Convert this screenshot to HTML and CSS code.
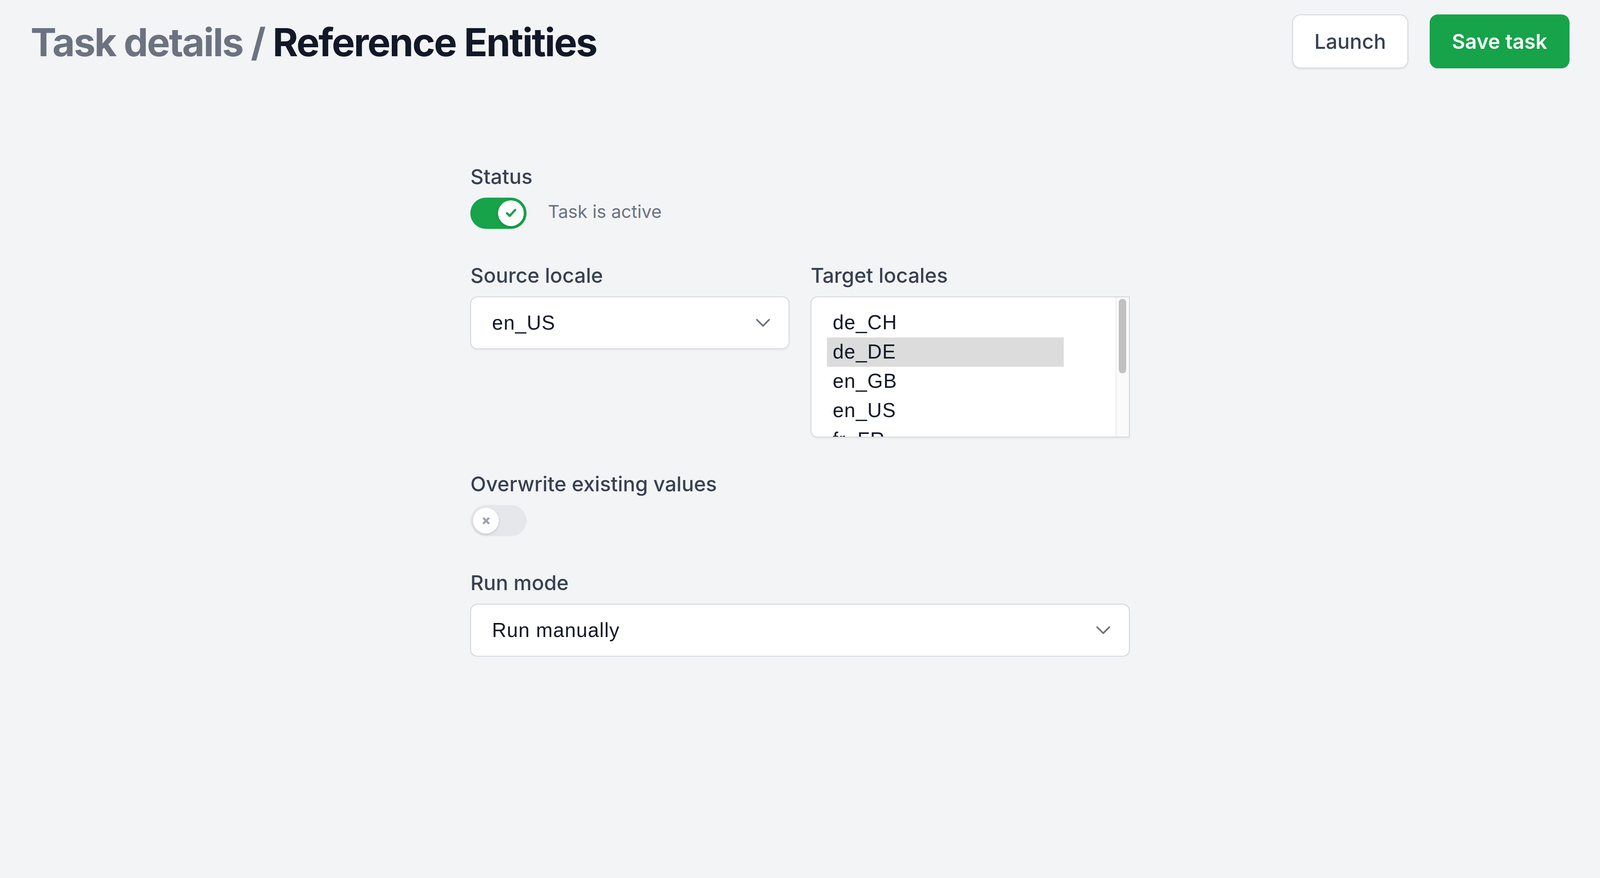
FILE: index.html
```html
<!DOCTYPE html>
<html lang="en">
<head>
    <meta charset="UTF-8">
    <meta name="viewport" content="width=device-width, initial-scale=1.0">
    <title>Task details</title>

    <link rel="stylesheet" href="styles.css">
</head>
<body>

    <header class="page-header">
        <h1 class="page-title"><span class="crumb">Task details /</span> Reference Entities</h1>
        <div class="actions">
            <button class="btn btn-secondary">Launch</button>
            <button class="btn btn-primary">Save task</button>
        </div>
    </header>

    <main class="task-form">
        <!-- Status -->
        <div class="field">
            <div class="label">Status</div>
            <div class="toggle-row">
                <span class="toggle is-on">
                    <span class="knob">
                        <svg class="icon-check" viewBox="0 0 11 9"><path d="M1.5 4.6l2.6 2.6 5.4-5.8" fill="none" stroke="#16a34a" stroke-width="2.2" stroke-linecap="round" stroke-linejoin="round"/></svg>
                    </span>
                </span>
                <span class="toggle-text">Task is active</span>
            </div>
        </div>

        <!-- Locales -->
        <div class="field-row">
            <div class="field">
                <div class="label">Source locale</div>
                <div class="select">
                    <span>en_US</span>
                    <svg class="icon-chevron" viewBox="0 0 14 8"><path d="M1 1l6 6 6-6" fill="none" stroke="#6b7280" stroke-width="1.6" stroke-linecap="round" stroke-linejoin="round"/></svg>
                </div>
            </div>
            <div class="field">
                <div class="label">Target locales</div>
                <div class="listbox">
                    <div class="options">
                        <div class="option">de_CH</div>
                        <div class="option is-selected">de_DE</div>
                        <div class="option">en_GB</div>
                        <div class="option">en_US</div>
                        <div class="option">fr_FR</div>
                    </div>
                    <div class="scrollbar"><div class="thumb"></div></div>
                </div>
            </div>
        </div>

        <!-- Overwrite -->
        <div class="field">
            <div class="label">Overwrite existing values</div>
            <span class="toggle">
                <span class="knob">
                    <svg class="icon-x" viewBox="0 0 8 8"><path d="M1.7 1.7l4.6 4.6M6.3 1.7l-4.6 4.6" fill="none" stroke="#9ca3af" stroke-width="2" stroke-linecap="round"/></svg>
                </span>
            </span>
        </div>

        <!-- Run mode -->
        <div class="field">
            <div class="label">Run mode</div>
            <div class="select">
                <span>Run manually</span>
                <svg class="icon-chevron" viewBox="0 0 14 8"><path d="M1 1l6 6 6-6" fill="none" stroke="#6b7280" stroke-width="1.6" stroke-linecap="round" stroke-linejoin="round"/></svg>
            </div>
        </div>
    </main>

</body>
</html>
```

FILE: styles.css
```css
/* 1rem = 1/156.8 of the window width, so the page scales with the screen */
html {
    font-size: calc(100vw / 156.8);
    background: #f3f4f6;
}
body {
    margin: 0;
    font-family: Inter, "Noto Sans", sans-serif;
    color: #111827;
}
.page-header {
    display: flex;
    align-items: center;
    justify-content: space-between;
    padding: 1.4rem 3rem 0;
}
.page-title {
    margin: 0;
    font-size: 3.8rem;
    font-weight: 700;
    letter-spacing: -0.03em;
    line-height: 5.3rem;
    color: #111827;
    position: relative;
    top: 0.1rem;
}
.crumb {
    color: #6b7280;
}
.actions {
    display: flex;
    gap: 2.1rem;
}
.btn {
    height: 5.3rem;
    padding: 0 2.1rem;
    border: 0.1rem solid transparent;
    border-radius: 0.8rem;
    font-family: Inter, sans-serif;
    font-size: 2rem;
    font-weight: 600;
    cursor: pointer;
}
.btn-secondary {
    font-weight: 500;
    background: #fff;
    border-color: #d1d5db;
    color: #374151;
    box-shadow: 0 0.1rem 0.2rem rgba(0, 0, 0, 0.06);
}
.btn-primary {
    background: #16a34a;
    color: #fff;
}
.task-form {
    width: 64.6rem;
    margin: 9.24rem auto 0;
    display: flex;
    flex-direction: column;
    gap: 3.2rem;
}
.label {
    font-size: 2rem;
    line-height: 2.8rem;
    font-weight: 500;
    color: #374151;
    margin-bottom: 0.64rem;
}
.field-row {
    display: grid;
    grid-template-columns: 1fr 1fr;
    column-gap: 2.1rem;
    align-items: start;
}
.toggle-row {
    display: flex;
    align-items: center;
    gap: 2.1rem;
}
.toggle {
    display: flex;
    box-sizing: border-box;
    width: 5.5rem;
    height: 3.05rem;
    padding: 0.25rem;
    border-radius: 1.6rem;
    background: #e5e7eb;
}
.toggle.is-on {
    background: #16a34a;
    justify-content: flex-end;
}
.knob {
    display: flex;
    align-items: center;
    justify-content: center;
    width: 2.55rem;
    height: 2.55rem;
    border-radius: 50%;
    background: #fff;
    box-shadow: 0 0.1rem 0.25rem rgba(0, 0, 0, 0.15);
}
.icon-check {
    width: 1.1rem;
    height: 0.9rem;
}
.icon-x {
    width: 0.8rem;
    height: 0.8rem;
}
.icon-chevron {
    width: 1.4rem;
    height: 0.8rem;
}
.toggle-text {
    font-size: 1.75rem;
    line-height: 2.4rem;
    color: #6b7280;
    margin-top: -0.3rem;
}
.select {
    display: flex;
    align-items: center;
    justify-content: space-between;
    box-sizing: border-box;
    height: 5.16rem;
    padding: 0 1.8rem 0 2.04rem;
    border: 0.1rem solid #d1d5db;
    border-radius: 0.7rem;
    background: #fff;
    box-shadow: 0 0.1rem 0.2rem rgba(0, 0, 0, 0.05);
    font-family: "Liberation Sans", Arial, sans-serif;
    font-size: 1.95rem;
    letter-spacing: 0.05rem;
    color: #111827;
}
.listbox {
    display: flex;
    box-sizing: border-box;
    height: 13.8rem;
    border: 0.1rem solid #d1d5db;
    border-radius: 0.7rem 0 0 0.7rem;
    background: #fff;
    overflow: hidden;
    box-shadow: 0 0.1rem 0.2rem rgba(0, 0, 0, 0.05);
}
.options {
    flex: 1;
    padding: 1.05rem 0 0 1.5rem;
}
.option {
    box-sizing: border-box;
    width: 23.2rem;
    height: 2.87rem;
    line-height: 2.87rem;
    padding-left: 0.58rem;
    font-family: "Liberation Sans", Arial, sans-serif;
    font-size: 1.95rem;
    letter-spacing: 0.05rem;
    color: #111827;
}
.option.is-selected {
    background: #dcdcdc;
}
.scrollbar {
    width: 1.3rem;
    padding: 0.15rem 0.25rem 0;
    box-sizing: border-box;
    background: #fafafa;
    border-left: 0.1rem solid #ebebeb;
}
.thumb {
    width: 0.7rem;
    height: 7.3rem;
    border-radius: 0.4rem;
    background: #c1c1c1;
}
```
